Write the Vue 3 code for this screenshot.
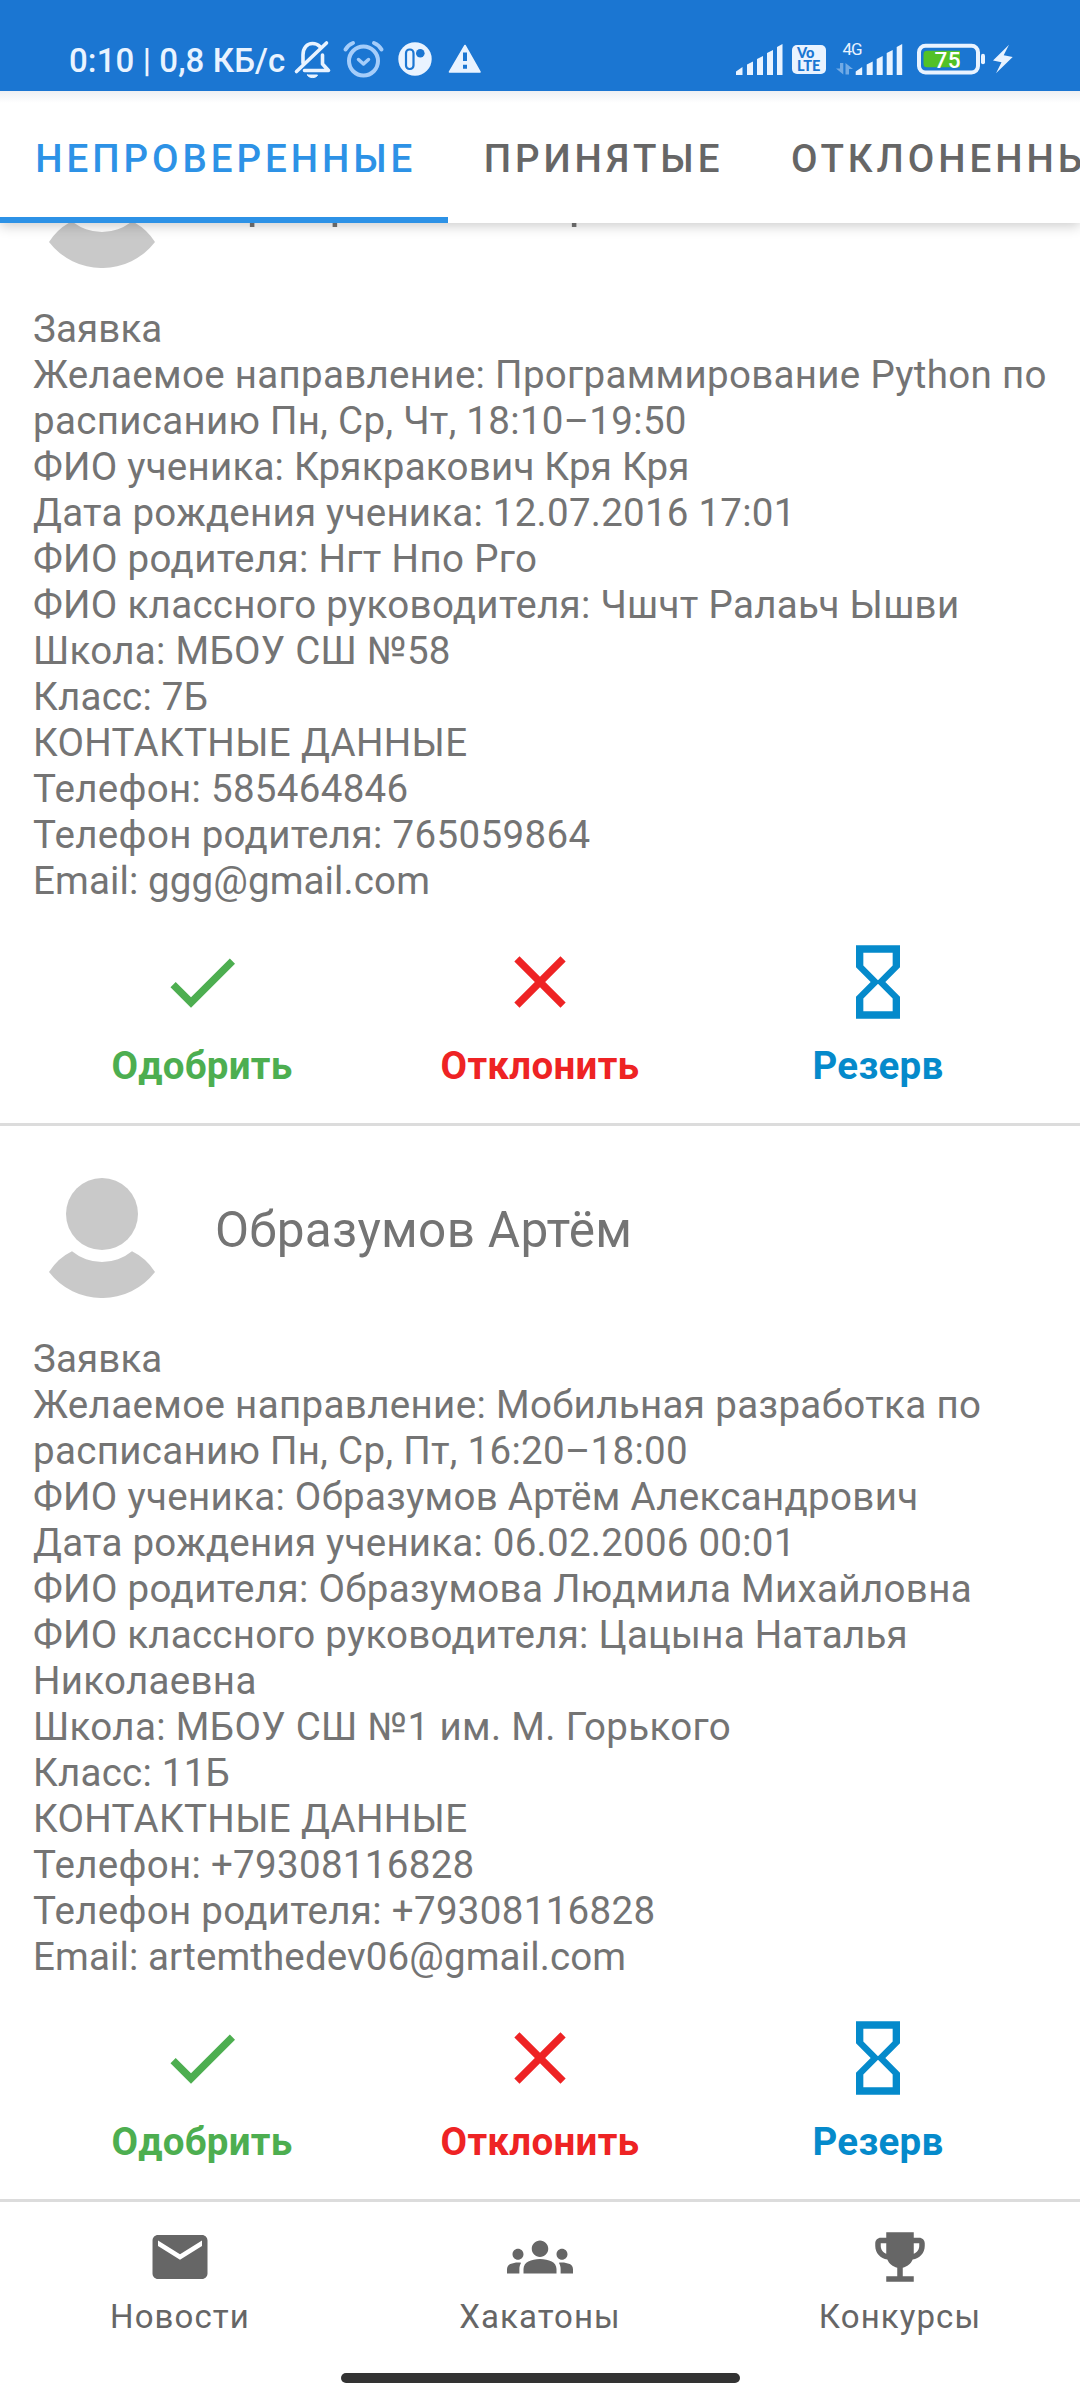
<script setup>
const tabs = [
  { label: 'Непроверенные', active: true },
  { label: 'Принятые', active: false },
  { label: 'Отклоненные', active: false },
]

const cards = [
  {
    name: 'Крякракович Кря',
    lines: [
      { text: 'Заявка', fit: 'latin' },
      { text: 'Желаемое направление: Программирование Python по' },
      { text: 'расписанию Пн, Ср, Чт, 18:10–19:50' },
      { text: 'ФИО ученика: Крякракович Кря Кря', fit: 'tight' },
      { text: 'Дата рождения ученика: 12.07.2016 17:01', fit: 'tight' },
      { text: 'ФИО родителя: Нгт Нпо Рго', fit: 'wide' },
      { text: 'ФИО классного руководителя: Чшчт Ралаьч Ышви' },
      { text: 'Школа: МБОУ СШ №58' },
      { text: 'Класс: 7Б', fit: 'tight' },
      { text: 'КОНТАКТНЫЕ ДАННЫЕ', fit: 'wide' },
      { text: 'Телефон: 585464846' },
      { text: 'Телефон родителя: 765059864', fit: 'wide' },
      { text: 'Email: ggg@gmail.com', fit: 'latin' },
    ],
  },
  {
    name: 'Образумов Артём',
    lines: [
      { text: 'Заявка', fit: 'latin' },
      { text: 'Желаемое направление: Мобильная разработка по', fit: 'wide' },
      { text: 'расписанию Пн, Ср, Пт, 16:20–18:00' },
      { text: 'ФИО ученика: Образумов Артём Александрович' },
      { text: 'Дата рождения ученика: 06.02.2006 00:01', fit: 'tight' },
      { text: 'ФИО родителя: Образумова Людмила Михайловна', fit: 'wide' },
      { text: 'ФИО классного руководителя: Цацына Наталья', fit: 'tight' },
      { text: 'Николаевна' },
      { text: 'Школа: МБОУ СШ №1 им. М. Горького', fit: 'wide' },
      { text: 'Класс: 11Б', fit: 'tight' },
      { text: 'КОНТАКТНЫЕ ДАННЫЕ', fit: 'wide' },
      { text: 'Телефон: +79308116828' },
      { text: 'Телефон родителя: +79308116828' },
      { text: 'Email: artemthedev06@gmail.com', fit: 'latin' },
    ],
  },
]

const actions = [
  { label: 'Одобрить', kind: 'approve', path: 'M9 16.17 4.83 12l-1.42 1.41L9 19 21 7l-1.41-1.41z' },
  { label: 'Отклонить', kind: 'reject', path: 'M19 6.41 17.59 5 12 10.59 6.41 5 5 6.41 10.59 12 5 17.59 6.41 19 12 13.41 17.59 19 19 17.59 13.41 12z' },
  { label: 'Резерв', kind: 'reserve', path: 'M6 2v6h.01L6 8.01 10 12l-4 4 .01.01H6V22h12v-5.99h-.01L18 16l-4-4 4-3.99-.01-.01H18V2H6zm10 14.5V20H8v-3.5l4-4 4 4zm-4-5-4-4V4h8v3.5l-4 4z' },
]

const nav = [
  { label: 'Новости', path: 'M20 4H4c-1.1 0-1.99.9-1.99 2L2 18c0 1.1.9 2 2 2h16c1.1 0 2-.9 2-2V6c0-1.1-.9-2-2-2zm0 4-8 5-8-5V6l8 5 8-5v2z' },
  { label: 'Хакатоны', path: 'M12 12.75c1.63 0 3.07.39 4.24.9 1.08.48 1.76 1.56 1.76 2.73V18H6v-1.61c0-1.18.68-2.26 1.76-2.73 1.17-.52 2.61-.91 4.24-.91zM4 13c1.1 0 2-.9 2-2s-.9-2-2-2-2 .9-2 2 .9 2 2 2zm1.13 1.1C4.76 14.04 4.39 14 4 14c-.99 0-1.93.21-2.78.58C.48 14.9 0 15.62 0 16.43V18h4.5v-1.61c0-.83.23-1.61.63-2.29zM20 13c1.1 0 2-.9 2-2s-.9-2-2-2-2 .9-2 2 .9 2 2 2zm4 3.43c0-.81-.48-1.53-1.22-1.85C21.93 14.21 20.99 14 20 14c-.39 0-.76.04-1.13.1.4.68.63 1.46.63 2.29V18H24v-1.57zM12 6c1.66 0 3 1.34 3 3s-1.34 3-3 3-3-1.34-3-3 1.34-3 3-3z' },
  { label: 'Конкурсы', path: 'M19 5h-2V3H7v2H5c-1.1 0-2 .9-2 2v1c0 2.55 1.92 4.63 4.39 4.94.63 1.5 1.98 2.63 3.61 2.96V19H7v2h10v-2h-4v-3.1c1.63-.33 2.98-1.46 3.61-2.96C19.08 12.63 21 10.55 21 8V7c0-1.1-.9-2-2-2zM5 8V7h2v3.82C5.84 10.4 5 9.3 5 8zm14 0c0 1.3-.84 2.4-2 2.82V7h2v1z' },
]

const bars = 'M1 31.5v-3.5l6.500-4.500v8zM12 31.500v-10.500l6-3v13.500zM22 31.500v-16l6-3v19zM32 31.500v-22l6-3v25zM42 31.500v-28l5.500-3v31z'
</script>

<template>
  <div class="screen">
    <header class="status">
      <span class="clock">0:10 | 0,8 КБ/с</span>
      <svg width="42" height="50" viewBox="292 36 42 50" fill="none" stroke="#e9f3ff" stroke-width="3.6" stroke-linecap="round" stroke-linejoin="round">
        <path d="M303 63V55c0-7 4-11.5 9.5-11.5 3 0 5.5 1 7.3 3M322.5 55v9l6 6.500H304.500" />
        <path d="M296.5 71.5 326.500 43" />
        <path d="M307.500 75h10c-1 3.500-9 3.500-10 0z" fill="#e9f3ff" stroke-width="1" />
      </svg>
      <svg width="60" height="50" viewBox="334 36 60 50" fill="none" stroke="#a5cdfa" stroke-linecap="round" stroke-linejoin="round">
        <circle cx="363.5" cy="61" r="14.5" stroke-width="4" />
        <path d="M358.5 59.5l5 4.500 5-4.500" stroke-width="3.5" />
        <path d="M345.5 49.5q2.500-4.500 7.500-6.500M381.500 49.500q-2.500-4.500-7.500-6.500" stroke-width="4" />
      </svg>
      <svg width="40" height="50" viewBox="394 36 40 50">
        <circle cx="415" cy="59" r="16.7" fill="#e9f3ff" />
        <rect x="406" y="49.5" width="7.5" height="19.5" rx="3.500" fill="#e9f3ff" stroke="#1b76d2" stroke-width="2.200" />
        <circle cx="420.3" cy="53.3" r="4.300" fill="#1b76d2" />
      </svg>
      <svg width="51" height="50" viewBox="434 36 51 50">
        <path d="M465 45.5 480 72H449.500z" fill="#e9f3ff" stroke="#e9f3ff" stroke-width="1.6" stroke-linejoin="round" />
        <path d="M463 52.500h4v8.500h-4zM463 64.700h4v4h-4z" fill="#1b76d2" />
      </svg>
      <div class="status-right">
        <svg width="57" height="50" viewBox="734.5 36 57 50"><path :d="bars" transform="translate(734.5 43.5)" fill="#e9f3ff" /></svg>
        <span class="volte"><b>Vo</b><b>LTE</b></span>
        <svg width="90" height="50" viewBox="826 36 90 50">
          <text x="841.5" y="54.5" font-size="17" fill="#e9f3ff" textLength="20">4G</text>
          <path d="M839 63h3.300v11.500L835 68.500h4zM844.500 74.500V63l7.500 6h-4v5.500z" fill="#e9f3ff" opacity=".42" />
          <path :d="bars" transform="translate(853.7 43.5)" fill="#e9f3ff" />
        </svg>
        <svg width="110" height="50" viewBox="916 36 110 50">
          <rect x="918" y="45.7" width="59" height="26.800" rx="6.500" fill="none" stroke="#e9f3ff" stroke-width="4" />
          <path d="M926 50.700h33v16.600h-33q-3.500 0-3.500-3.500v-9.600q0-3.500 3.500-3.500z" fill="#52c126" />
          <rect x="980" y="53.700" width="4" height="10.500" rx="2" fill="#e9f3ff" />
          <text x="933.5" y="67.7" font-size="22.5" font-weight="500" fill="#fff" textLength="26">75</text>
          <path d="M1008 44.700 992 60.500l8.500 1.700L995 73.300 1011.700 57l-9-1.700z" fill="#e9f3ff" />
        </svg>
      </div>
    </header>

    <nav class="tabs">
      <div v-for="tab in tabs" :key="tab.label" class="tab" :class="{ active: tab.active }">{{ tab.label }}</div>
    </nav>

    <main class="list">
      <div class="scroll">
        <article v-for="card in cards" :key="card.name" class="card">
          <div class="person">
            <svg width="107" height="121" viewBox="0 0 107 121" fill="#c9c9c9">
              <circle cx="53" cy="37" r="36" />
              <path d="M23 74.3A47.3 47.3 0 0 0 83 74.3Q97 81 106 95A67 67 0 0 1 0 95Q9 81 23 74.3z" />
            </svg>
            <h2>{{ card.name }}</h2>
          </div>
          <div class="details">
            <p v-for="line in card.lines" :key="line.text" :class="line.fit">{{ line.text }}</p>
          </div>
          <div class="actions">
            <button v-for="a in actions" :key="a.kind" :class="a.kind">
              <svg width="88" height="88" viewBox="0 0 24 24" fill="currentColor"><path :d="a.path" /></svg>
              <span>{{ a.label }}</span>
            </button>
          </div>
        </article>
      </div>
    </main>

    <footer class="bottom">
      <div class="items">
        <div v-for="n in nav" :key="n.label" class="item">
          <svg width="66" height="66" viewBox="0 0 24 24" fill="currentColor"><path :d="n.path" /></svg>
          <span>{{ n.label }}</span>
        </div>
      </div>
      <div class="handle"></div>
    </footer>
  </div>
</template>

<style>
body { margin: 0; }
</style>

<style scoped>
.screen {
  width: 1080px;
  height: 2400px;
  overflow: hidden;
  display: flex;
  flex-direction: column;
  background: #fff;
  font-family: Roboto, "Noto Sans", sans-serif;
  color: #747474;
}
.status {
  height: 55px;
  padding: 36px 0 0 69px;
  flex: none;
  display: flex;
  background: #1b76d2;
  color: #e9f3ff;
}
.status svg { flex: none; display: block; }
.clock {
  width: 223px;
  flex: none;
  white-space: nowrap;
  font-size: 33px;
  font-weight: 500;
  line-height: 50px;
  letter-spacing: 0.1px;
}
.status-right { margin-left: 249.5px; display: flex; }
.volte {
  flex: none;
  width: 34px;
  height: 29px;
  margin: 9px 0.5px 0;
  border-radius: 5px;
  background: #e9f3ff;
  color: #1b76d2;
  display: flex;
  flex-direction: column;
  box-sizing: border-box;
  padding: 2px 0 0 5px;
  font: 700 14.5px/12.5px Lato, sans-serif;
}
.volte b { font-weight: 900; }
.tabs {
  height: 132px;
  flex: none;
  display: flex;
  background: linear-gradient(#eef0f3, #fff 12px);
  box-shadow: 0 3px 12px rgba(0, 0, 0, 0.2);
  position: relative;
  clip-path: inset(0 0 -30px 0);
}
.tab {
  flex: none;
  box-sizing: border-box;
  height: 132px;
  padding: 0 32.2px 0 35.3px;
  border-bottom: 6px solid transparent;
  font-size: 38.5px;
  font-weight: 500;
  letter-spacing: 3.94px;
  line-height: 136px;
  text-transform: uppercase;
  color: #666;
  white-space: nowrap;
}
.tab.active { color: #2d92e6; border-color: #2d92e6; }
.list { flex: 1; min-height: 0; overflow: hidden; }
.scroll { margin-top: -127px; }
.card { border-bottom: 3px solid #dcdcdc; }
.person { display: flex; height: 159px; padding: 51px 0 0 49px; align-items: flex-start; }
h2 {
  margin: 24px 0 0 59px;
  font-size: 49.5px;
  font-weight: 400;
  line-height: 58px;
  letter-spacing: 0.3px;
  white-space: nowrap;
}
.details {
  padding-left: 33px;
  font-size: 38.5px;
  line-height: 46px;
  letter-spacing: 0.31px;
  white-space: nowrap;
}
p { margin: 0; }
.latin { letter-spacing: 0.12px; }
.tight { letter-spacing: 0.24px; }
.wide { letter-spacing: 0.35px; }
.actions { display: flex; padding: 34px 33px 34px; }
button {
  flex: 1 1 0;
  display: flex;
  flex-direction: column;
  align-items: center;
  gap: 17px;
  padding: 0;
  border: 0;
  background: none;
  font: 700 38.5px/46px Roboto, sans-serif;
  letter-spacing: 0.3px;
}
.approve { color: #4dae50; }
.reject { color: #ee2324; }
.reserve { color: #058acb; }
.bottom { height: 198px; flex: none; background: #fff; color: #666; }
.items { display: flex; height: 171px; }
.item { flex: 1; display: flex; flex-direction: column; align-items: center; padding-top: 22px; }
.item span { margin-top: 7px; font-size: 33px; line-height: 40px; letter-spacing: 1.1px; }
.handle { width: 399px; height: 10px; margin: 0 auto; border-radius: 5px; background: #333; }
</style>
